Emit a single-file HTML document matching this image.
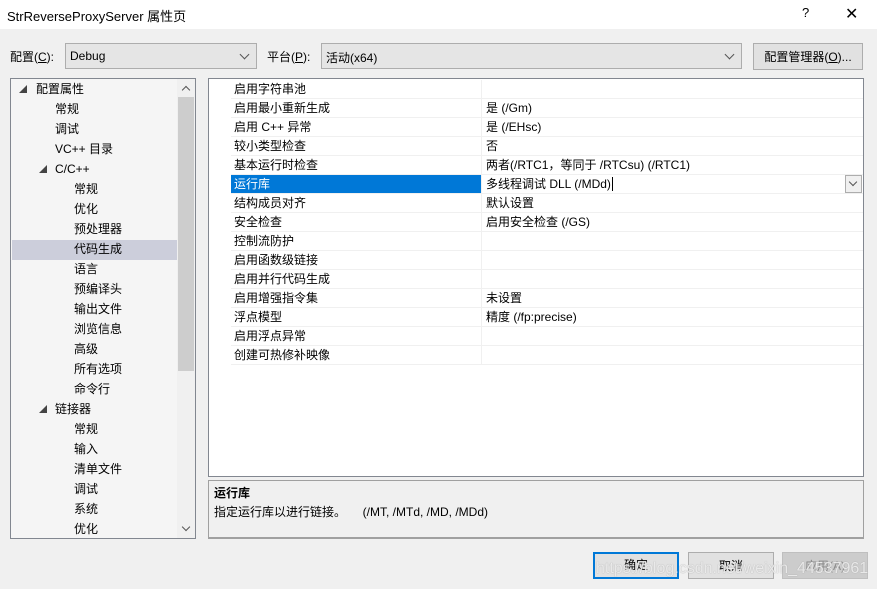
<!DOCTYPE html>
<html><head><meta charset="utf-8"><style>
*{margin:0;padding:0;box-sizing:border-box}
body{width:877px;height:589px;background:#f0f0f0;font-family:"Liberation Sans","Microsoft YaHei","Noto Sans CJK SC",sans-serif;font-size:12px;color:#000;position:relative;overflow:hidden}
.a{position:absolute;white-space:nowrap}
.title{left:0;top:0;width:877px;height:29px;background:#fff}
.combo{background:#e5e5e5;border:1px solid #adadad;height:26px}
.btn{background:#e1e1e1;border:1px solid #adadad;text-align:center;line-height:26px}
.tree{left:10px;top:78px;width:186px;height:461px;border:1px solid #828790;background:#f5f5f5}
.ti{position:absolute;height:20px;line-height:20px}
.grid{left:208px;top:78px;width:656px;height:399px;border:1px solid #828790;background:#fff}
.row{position:absolute;left:22px;width:632px;height:19px;border-bottom:1px solid #f0f0f0;line-height:19px}
.row .k{position:absolute;left:3px}
.row .v{position:absolute;left:250px;border-left:1px solid #f0f0f0;padding-left:4px;height:19px;top:0}
.chev{position:absolute;width:7px;height:7px;border-right:1px solid #555;border-bottom:1px solid #555;transform:rotate(45deg)}
</style></head><body>
<div class="a title"></div>
<div class="a" style="left:7px;top:6px;font-size:13px">StrReverseProxyServer 属性页</div>
<div class="a" style="left:802px;top:5px;font-size:13px">?</div>
<div class="a" style="left:845px;top:4px;font-size:16px;font-weight:normal">✕</div>

<div class="a" style="left:10px;top:48px">配置(<u>C</u>):</div>
<div class="a combo" style="left:65px;top:43px;width:192px"><span style="position:absolute;left:4px;top:5px">Debug</span><span class="chev" style="right:8px;top:7px"></span></div>
<div class="a" style="left:267px;top:48px">平台(<u>P</u>):</div>
<div class="a combo" style="left:321px;top:43px;width:421px"><span style="position:absolute;left:4px;top:5px">活动(x64)</span><span class="chev" style="right:8px;top:7px"></span></div>
<div class="a btn" style="left:753px;top:43px;width:110px;height:27px">配置管理器(<u>O</u>)...</div>

<div class="a tree">
<div class="ti" style="left:8px;top:1px;font-size:8px;color:#444">◢</div><div class="ti" style="left:25px;top:0">配置属性</div>
<div class="ti" style="left:44px;top:20px">常规</div>
<div class="ti" style="left:44px;top:40px">调试</div>
<div class="ti" style="left:44px;top:60px">VC++ 目录</div>
<div class="ti" style="left:28px;top:81px;font-size:8px;color:#444">◢</div><div class="ti" style="left:44px;top:80px">C/C++</div>
<div class="ti" style="left:63px;top:100px">常规</div>
<div class="ti" style="left:63px;top:120px">优化</div>
<div class="ti" style="left:63px;top:140px">预处理器</div>
<div class="ti" style="left:1px;top:161px;width:165px;background:#cccedb"></div>
<div class="ti" style="left:63px;top:160px">代码生成</div>
<div class="ti" style="left:63px;top:180px">语言</div>
<div class="ti" style="left:63px;top:200px">预编译头</div>
<div class="ti" style="left:63px;top:220px">输出文件</div>
<div class="ti" style="left:63px;top:240px">浏览信息</div>
<div class="ti" style="left:63px;top:260px">高级</div>
<div class="ti" style="left:63px;top:280px">所有选项</div>
<div class="ti" style="left:63px;top:300px">命令行</div>
<div class="ti" style="left:28px;top:321px;font-size:8px;color:#444">◢</div><div class="ti" style="left:44px;top:320px">链接器</div>
<div class="ti" style="left:63px;top:340px">常规</div>
<div class="ti" style="left:63px;top:360px">输入</div>
<div class="ti" style="left:63px;top:380px">清单文件</div>
<div class="ti" style="left:63px;top:400px">调试</div>
<div class="ti" style="left:63px;top:420px">系统</div>
<div class="ti" style="left:63px;top:440px">优化</div>
<div style="position:absolute;left:166px;top:0;width:18px;height:459px;background:#f0f0f0"></div>
<div style="position:absolute;left:167px;top:18px;width:16px;height:274px;background:#cdcdcd"></div>
<div class="chev" style="left:172px;top:8px;transform:rotate(225deg);width:6px;height:6px"></div>
<div class="chev" style="left:172px;top:445px;width:6px;height:6px"></div>
</div>

<div class="a grid">
<div class="row" style="top:1px"><span class="k">启用字符串池</span><span class="v"></span></div>
<div class="row" style="top:20px"><span class="k">启用最小重新生成</span><span class="v">是 (/Gm)</span></div>
<div class="row" style="top:39px"><span class="k">启用 C++ 异常</span><span class="v">是 (/EHsc)</span></div>
<div class="row" style="top:58px"><span class="k">较小类型检查</span><span class="v">否</span></div>
<div class="row" style="top:77px"><span class="k">基本运行时检查</span><span class="v">两者(/RTC1，等同于 /RTCsu) (/RTC1)</span></div>
<div class="row" style="top:96px"><span class="k" style="left:0;width:250px;height:18px;background:#0078d7;color:#fff;padding-left:3px">运行库</span><span class="v">多线程调试 DLL (/MDd)<span style="border-left:1px solid #000;margin-left:1px"></span></span>
<span style="position:absolute;right:1px;top:0;width:17px;height:18px;border:1px solid #adadad;background:#f0f0f0"><span class="chev" style="left:4px;top:3px;width:6px;height:6px"></span></span></div>
<div class="row" style="top:115px"><span class="k">结构成员对齐</span><span class="v">默认设置</span></div>
<div class="row" style="top:134px"><span class="k">安全检查</span><span class="v">启用安全检查 (/GS)</span></div>
<div class="row" style="top:153px"><span class="k">控制流防护</span><span class="v"></span></div>
<div class="row" style="top:172px"><span class="k">启用函数级链接</span><span class="v"></span></div>
<div class="row" style="top:191px"><span class="k">启用并行代码生成</span><span class="v"></span></div>
<div class="row" style="top:210px"><span class="k">启用增强指令集</span><span class="v">未设置</span></div>
<div class="row" style="top:229px"><span class="k">浮点模型</span><span class="v">精度 (/fp:precise)</span></div>
<div class="row" style="top:248px"><span class="k">启用浮点异常</span><span class="v"></span></div>
<div class="row" style="top:267px"><span class="k">创建可热修补映像</span><span class="v"></span></div>
</div>

<div class="a" style="left:208px;top:480px;width:656px;height:59px;border:1px solid #a0a0a0;border-bottom:2px solid #a0a0a0;background:#f0f0f0"></div>
<div class="a" style="left:214px;top:484px;font-weight:bold">运行库</div>
<div class="a" style="left:214px;top:503px">指定运行库以进行链接。&nbsp;&nbsp;&nbsp;&nbsp; (/MT, /MTd, /MD, /MDd)</div>

<div class="a btn" style="left:593px;top:552px;width:86px;height:27px;border:2px solid #0078d7;line-height:23px">确定</div>
<div class="a btn" style="left:688px;top:552px;width:86px;height:27px">取消</div>
<div class="a btn" style="left:782px;top:552px;width:86px;height:27px;background:#ccc;border-color:#bfbfbf;color:#888">应用(A)</div>
<div class="a" style="left:596px;top:560px;font-size:16px;color:rgba(255,255,255,0.75);text-shadow:0 0 1px #999">https://blog.csdn.net/weixin_44537961</div>
</body></html>
